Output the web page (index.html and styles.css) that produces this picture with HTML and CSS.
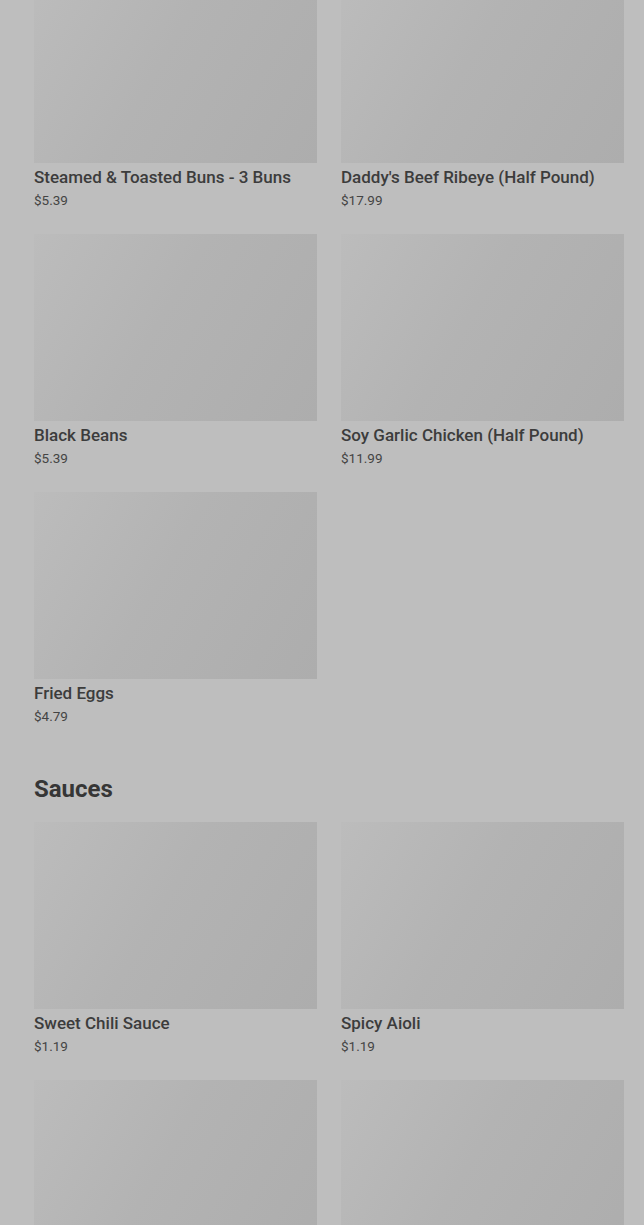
FILE: index.html
```html
<!DOCTYPE html>
<html lang="en">
<head>
    <meta charset="UTF-8">
    <meta name="viewport" content="width=device-width, initial-scale=1.0">
    <title>Menu</title>
    <link rel="stylesheet" href="styles.css">
</head>
<body>
    <div id="menu">
        <section class="category">
            <div class="items">
                <div class="item">
                    <div class="thumb"></div>
                    <div class="name">Steamed &amp; Toasted Buns - 3 Buns</div>
                    <div class="price">$5.39</div>
                </div>
                <div class="item">
                    <div class="thumb"></div>
                    <div class="name">Daddy's Beef Ribeye (Half Pound)</div>
                    <div class="price">$17.99</div>
                </div>
                <div class="item">
                    <div class="thumb"></div>
                    <div class="name">Black Beans</div>
                    <div class="price">$5.39</div>
                </div>
                <div class="item">
                    <div class="thumb"></div>
                    <div class="name">Soy Garlic Chicken (Half Pound)</div>
                    <div class="price">$11.99</div>
                </div>
                <div class="item">
                    <div class="thumb"></div>
                    <div class="name">Fried Eggs</div>
                    <div class="price">$4.79</div>
                </div>
            </div>
        </section>

        <section class="category">
            <h2>Sauces</h2>
            <div class="items">
                <div class="item">
                    <div class="thumb"></div>
                    <div class="name">Sweet Chili Sauce</div>
                    <div class="price">$1.19</div>
                </div>
                <div class="item">
                    <div class="thumb"></div>
                    <div class="name">Spicy Aioli</div>
                    <div class="price">$1.19</div>
                </div>
                <div class="item">
                    <div class="thumb"></div>
                    <div class="name"></div>
                    <div class="price"></div>
                </div>
                <div class="item">
                    <div class="thumb"></div>
                    <div class="name"></div>
                    <div class="price"></div>
                </div>
            </div>
        </section>
    </div>
</body>
</html>
```

FILE: styles.css
```css
body {
    margin: 0;
    padding: 0;
    background: #bebebe;
    font-family: Roboto, "Liberation Sans", sans-serif;
    color: #3c3c3c;
    overflow: hidden;
}
#menu {
    margin-top: -24px;
    padding: 0 20px 0 34px;
}
.category {
    margin-bottom: 49px;
}
.category h2 {
    margin: 0 0 18px;
    font-size: 24px;
    line-height: 30px;
    font-weight: 700;
    color: #363636;
}
.items {
    display: grid;
    grid-template-columns: 1fr 1fr;
    column-gap: 24px;
    row-gap: 25px;
}
.item {
    display: flex;
    flex-direction: column;
}
.thumb {
    height: 187px;
    background: linear-gradient(120deg, #bcbcbc 0%, #b3b3b3 45%, #adadad 100%);
}
.name {
    margin-top: 3px;
    font-size: 17px;
    line-height: 22px;
    font-weight: 500;
    min-height: 22px;
}
.price {
    margin-top: 3px;
    font-size: 13.5px;
    line-height: 18px;
    color: #444;
    min-height: 18px;
}
```
